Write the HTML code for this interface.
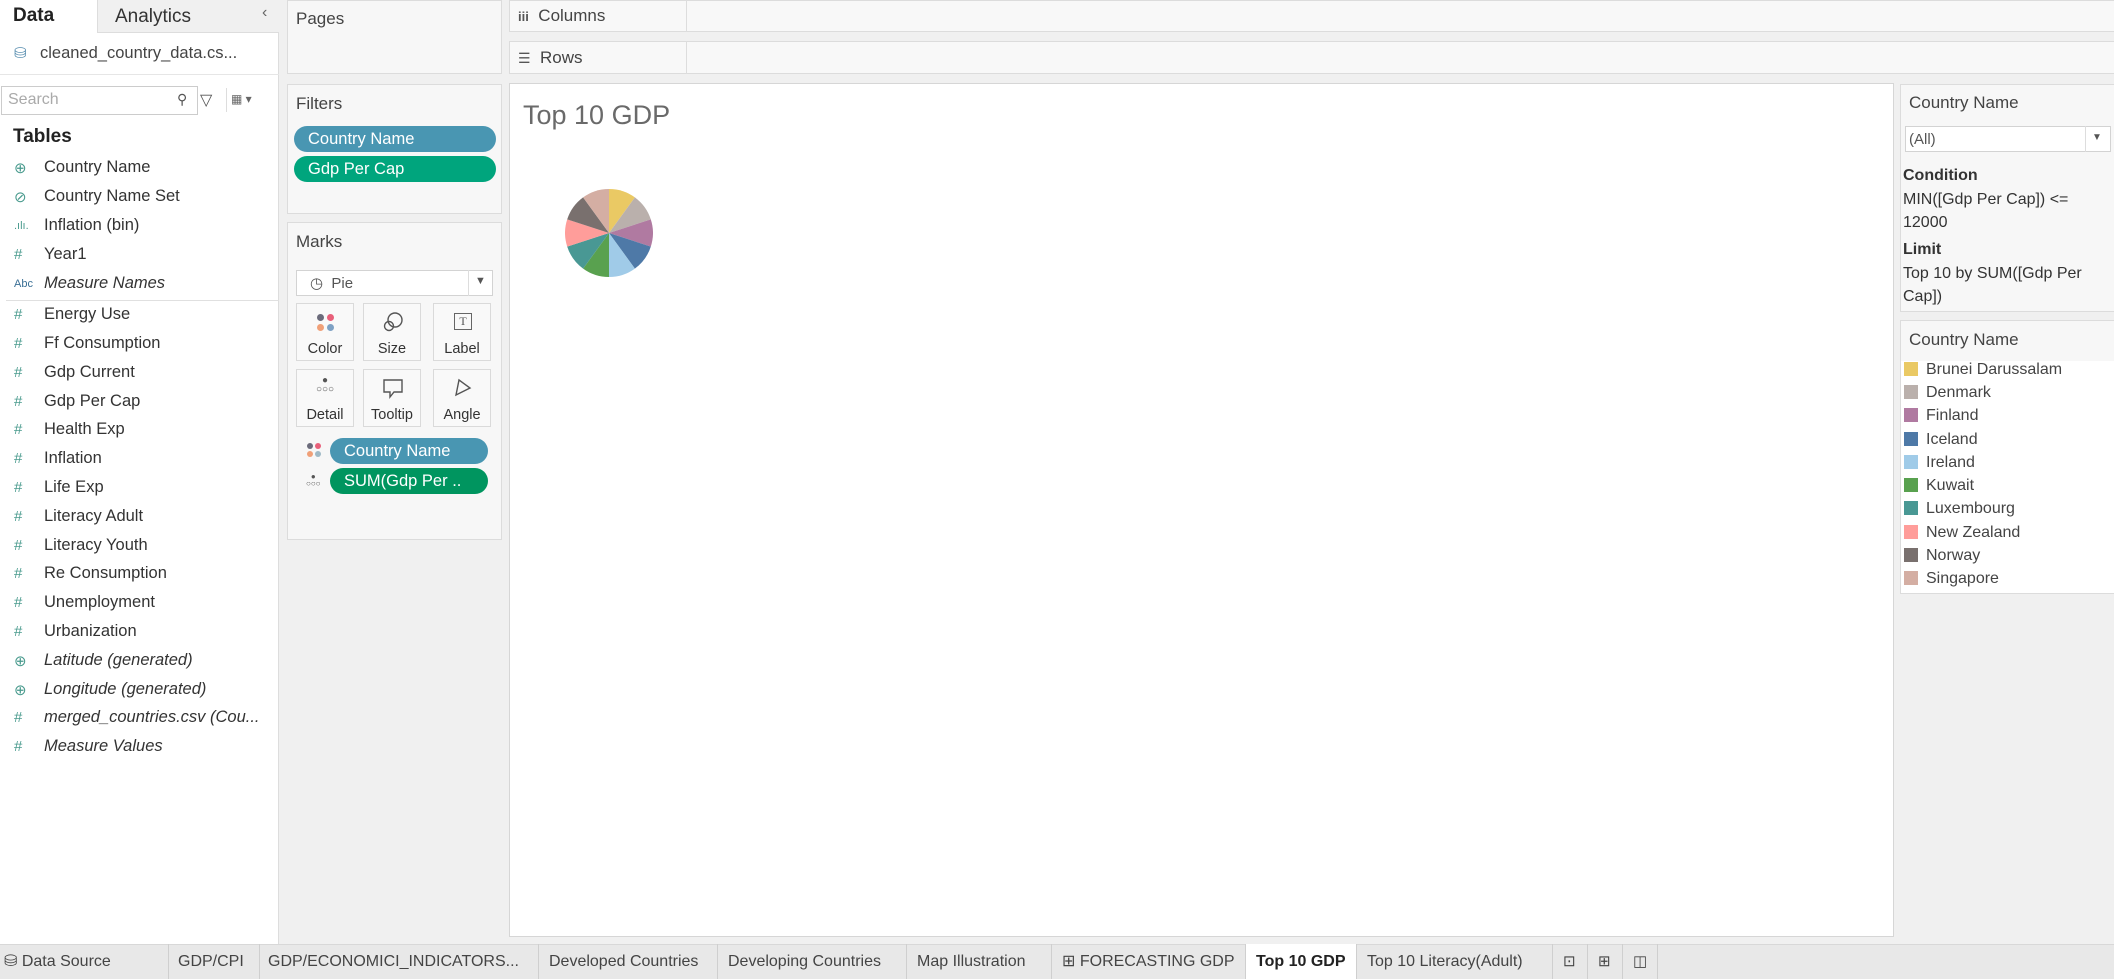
<!DOCTYPE html>
<html><head><meta charset="utf-8"><style>
*{box-sizing:border-box;margin:0;padding:0}
body{width:2114px;height:979px;overflow:hidden;background:#f0f0f0;font-family:"Liberation Sans",sans-serif;color:#333;position:relative}
.a{position:absolute}
.panel{position:absolute;background:#f7f7f7;border:1px solid #dcdcdc}
.t{font-size:17px;color:#444;white-space:nowrap}
.row{position:absolute;left:0;height:28px;font-size:16.5px;color:#333;white-space:nowrap}
.row .ic{position:absolute;left:14px;top:3px;color:#4a9b8e;font-size:15px}
.row .tx{position:absolute;left:44px;top:2px}
.pill{position:absolute;border-radius:14px;color:#fff;font-size:16.5px;padding-left:14px;line-height:26px;height:26px}
.mk{position:absolute;width:58px;height:58px;background:#f9f9f9;border:1px solid #dadada;text-align:center;font-size:14.5px;color:#333}
.mk .l{position:absolute;bottom:3px;left:0;right:0}
.tab{position:absolute;top:944px;height:35px;border-right:1px solid #cfcfcf;font-size:16px;color:#444;line-height:35px;padding-left:10px;white-space:nowrap}
.lg{position:absolute;left:1904px;font-size:16px;color:#444;white-space:nowrap}
.lg i{display:inline-block;width:14px;height:14px;margin-right:8px;vertical-align:-2px}
</style></head><body>
<!-- left panel -->
<div class="a" style="left:0;top:0;width:279px;height:944px;background:#fff;border-right:1px solid #ddd"></div>
<div class="a" style="left:97px;top:0;width:182px;height:33px;background:#f0f0f0;border-left:1px solid #ddd;border-bottom:1px solid #ddd"></div>
<div class="a" style="left:13px;top:5px;font-size:19px;font-weight:bold;color:#222">Data</div>
<div class="a" style="left:115px;top:6px;font-size:19px;color:#333">Analytics</div>
<div class="a" style="left:262px;top:4px;font-size:16px;color:#666">‹</div>
<div class="a" style="left:14px;top:44px;font-size:15px;color:#5a8fb0">⛁</div>
<div class="a t" style="left:40px;top:44px;font-size:16.5px">cleaned_country_data.cs...</div>
<div class="a" style="left:0;top:74px;width:279px;height:1px;background:#e6e6e6"></div>
<div class="a" style="left:1px;top:86px;width:197px;height:29px;border:1px solid #ccc;background:#fff"></div>
<div class="a" style="left:8px;top:91px;font-size:16px;color:#aaa">Search</div>
<div class="a" style="left:177px;top:91px;font-size:14px;color:#555">⚲</div>
<div class="a" style="left:200px;top:90px;font-size:16px;color:#555">▽</div>
<div class="a" style="left:226px;top:88px;width:1px;height:24px;background:#ddd"></div>
<div class="a" style="left:231px;top:92px;font-size:12px;color:#666">▦ ▾</div>
<div class="a" style="left:13px;top:126px;font-size:19px;font-weight:bold;color:#222">Tables</div>
<div class="row" style="top:156px"><span class="ic">⊕</span><span class="tx">Country Name</span></div>
<div class="row" style="top:185px"><span class="ic">⊘</span><span class="tx">Country Name Set</span></div>
<div class="row" style="top:214px"><span class="ic" style="font-size:11px;top:6px">.ılı.</span><span class="tx">Inflation (bin)</span></div>
<div class="row" style="top:243px"><span class="ic">#</span><span class="tx">Year1</span></div>
<div class="row" style="top:272px"><span class="ic" style="font-size:11px;top:6px;color:#3a6f95">Abc</span><span class="tx" style="font-style:italic">Measure Names</span></div>
<div class="a" style="left:6px;top:300px;width:273px;height:1px;background:#e0e0e0"></div>
<div class="row" style="top:303px"><span class="ic">#</span><span class="tx">Energy Use</span></div>
<div class="row" style="top:332px"><span class="ic">#</span><span class="tx">Ff Consumption</span></div>
<div class="row" style="top:361px"><span class="ic">#</span><span class="tx">Gdp Current</span></div>
<div class="row" style="top:390px"><span class="ic">#</span><span class="tx">Gdp Per Cap</span></div>
<div class="row" style="top:418px"><span class="ic">#</span><span class="tx">Health Exp</span></div>
<div class="row" style="top:447px"><span class="ic">#</span><span class="tx">Inflation</span></div>
<div class="row" style="top:476px"><span class="ic">#</span><span class="tx">Life Exp</span></div>
<div class="row" style="top:505px"><span class="ic">#</span><span class="tx">Literacy Adult</span></div>
<div class="row" style="top:534px"><span class="ic">#</span><span class="tx">Literacy Youth</span></div>
<div class="row" style="top:562px"><span class="ic">#</span><span class="tx">Re Consumption</span></div>
<div class="row" style="top:591px"><span class="ic">#</span><span class="tx">Unemployment</span></div>
<div class="row" style="top:620px"><span class="ic">#</span><span class="tx">Urbanization</span></div>
<div class="row" style="top:649px"><span class="ic">⊕</span><span class="tx" style="font-style:italic">Latitude (generated)</span></div>
<div class="row" style="top:678px"><span class="ic">⊕</span><span class="tx" style="font-style:italic">Longitude (generated)</span></div>
<div class="row" style="top:706px"><span class="ic">#</span><span class="tx" style="font-style:italic">merged_countries.csv (Cou...</span></div>
<div class="row" style="top:735px"><span class="ic">#</span><span class="tx" style="font-style:italic">Measure Values</span></div>

<!-- middle cards -->
<div class="panel" style="left:287px;top:0;width:215px;height:74px"></div>
<div class="a t" style="left:296px;top:9px">Pages</div>
<div class="panel" style="left:287px;top:84px;width:215px;height:130px"></div>
<div class="a t" style="left:296px;top:94px">Filters</div>
<div class="pill" style="left:294px;top:126px;width:202px;background:#4996b2">Country Name</div>
<div class="pill" style="left:294px;top:156px;width:202px;background:#00a57d">Gdp Per Cap</div>
<div class="panel" style="left:287px;top:222px;width:215px;height:318px"></div>
<div class="a t" style="left:296px;top:232px">Marks</div>
<div class="a" style="left:296px;top:270px;width:197px;height:26px;background:#fff;border:1px solid #d3d3d3"></div>
<div class="a" style="left:310px;top:274px;font-size:15px;color:#555">◷ &nbsp;Pie</div>
<div class="a" style="left:468px;top:270px;width:1px;height:26px;background:#ddd"></div>
<div class="a" style="left:475px;top:275px;font-size:11px;color:#555">▼</div>
<div class="mk" style="left:296px;top:303px"><div style="position:absolute;left:20px;top:10px;width:18px;height:18px"><i style="position:absolute;left:0;top:0;width:7px;height:7px;border-radius:50%;background:#6b6b7b"></i><i style="position:absolute;left:10px;top:0;width:7px;height:7px;border-radius:50%;background:#e8607a"></i><i style="position:absolute;left:0;top:10px;width:7px;height:7px;border-radius:50%;background:#f0a078"></i><i style="position:absolute;left:10px;top:10px;width:7px;height:7px;border-radius:50%;background:#7ea1c4"></i></div><div class="l">Color</div></div>
<div class="mk" style="left:363px;top:303px"><svg style="position:absolute;left:18px;top:7px" width="22" height="22" viewBox="0 0 22 22" fill="none" stroke="#555" stroke-width="1.4"><circle cx="13" cy="9" r="7"/><circle cx="7" cy="15" r="4.5"/></svg><div class="l">Size</div></div>
<div class="mk" style="left:433px;top:303px"><div style="position:absolute;left:20px;top:9px;width:18px;height:17px;border:1.5px solid #666;font-size:12px;line-height:14px;color:#555;font-family:'Liberation Serif',serif">T</div><div class="l">Label</div></div>
<div class="mk" style="left:296px;top:369px"><div style="position:absolute;left:0;right:0;top:6px;font-size:10px;color:#555;line-height:9px">●<br>○○○</div><div class="l">Detail</div></div>
<div class="mk" style="left:363px;top:369px"><svg style="position:absolute;left:18px;top:7px" width="22" height="22" viewBox="0 0 22 22" fill="none" stroke="#555" stroke-width="1.4"><path d="M2 3H20V15H12L8 20V15H2Z"/></svg><div class="l">Tooltip</div></div>
<div class="mk" style="left:433px;top:369px"><svg style="position:absolute;left:19px;top:7px" width="22" height="22" viewBox="0 0 22 22" fill="none" stroke="#555" stroke-width="1.4"><path d="M6 3L17 11L3 18Z"/></svg><div class="l">Angle</div></div>
<div class="a" style="left:307px;top:443px;width:14px;height:14px"><i style="position:absolute;left:0;top:0;width:6px;height:6px;border-radius:50%;background:#6b6b7b"></i><i style="position:absolute;left:8px;top:0;width:6px;height:6px;border-radius:50%;background:#e8607a"></i><i style="position:absolute;left:0;top:8px;width:6px;height:6px;border-radius:50%;background:#f0a078"></i><i style="position:absolute;left:8px;top:8px;width:6px;height:6px;border-radius:50%;background:#9fb9c6"></i></div>
<div class="pill" style="left:330px;top:438px;width:158px;background:#4996b2">Country Name</div>
<div class="a" style="left:306px;top:473px;font-size:8px;color:#555;line-height:7px;text-align:center">●<br>○○○</div>
<div class="pill" style="left:330px;top:468px;width:158px;background:#00955f">SUM(Gdp Per ..</div>

<!-- shelves -->
<div class="panel" style="left:509px;top:0;width:1610px;height:32px;background:#f8f8f8"></div>
<div class="a" style="left:686px;top:0;width:1px;height:32px;background:#ddd"></div>
<div class="a t" style="left:518px;top:6px"><b style="font-size:13px;color:#555">iii</b> &nbsp;Columns</div>
<div class="panel" style="left:509px;top:41px;width:1610px;height:33px;background:#f8f8f8"></div>
<div class="a" style="left:686px;top:41px;width:1px;height:33px;background:#ddd"></div>
<div class="a t" style="left:518px;top:48px"><span style="font-size:14px;color:#555">☰</span> &nbsp;Rows</div>

<!-- canvas -->
<div class="a" style="left:509px;top:83px;width:1385px;height:854px;background:#fff;border:1px solid #d6d6d6"></div>
<div class="a" style="left:523px;top:100px;font-size:27px;color:#6a6a6a;font-weight:normal">Top 10 GDP</div>
<svg class="a" style="left:565px;top:189px" width="88" height="88" viewBox="-44 -44 88 88">
<path d="M0 0L0 -44A44 44 0 0 1 25.9 -35.6Z" fill="#eac964"/>
<path d="M0 0L25.9 -35.6A44 44 0 0 1 41.8 -13.6Z" fill="#bab0ac"/>
<path d="M0 0L41.8 -13.6A44 44 0 0 1 41.8 13.6Z" fill="#b07aa1"/>
<path d="M0 0L41.8 13.6A44 44 0 0 1 25.9 35.6Z" fill="#4e79a7"/>
<path d="M0 0L25.9 35.6A44 44 0 0 1 0 44Z" fill="#a0cbe8"/>
<path d="M0 0L0 44A44 44 0 0 1 -25.9 35.6Z" fill="#59a14f"/>
<path d="M0 0L-25.9 35.6A44 44 0 0 1 -41.8 13.6Z" fill="#499894"/>
<path d="M0 0L-41.8 13.6A44 44 0 0 1 -41.8 -13.6Z" fill="#ff9d9a"/>
<path d="M0 0L-41.8 -13.6A44 44 0 0 1 -25.9 -35.6Z" fill="#79706e"/>
<path d="M0 0L-25.9 -35.6A44 44 0 0 1 0 -44Z" fill="#d4aea3"/>
</svg>

<!-- right panel -->
<div class="panel" style="left:1900px;top:84px;width:220px;height:228px"></div>
<div class="a t" style="left:1909px;top:93px">Country Name</div>
<div class="a" style="left:1905px;top:126px;width:206px;height:26px;background:#fff;border:1px solid #d3d3d3"></div>
<div class="a" style="left:1909px;top:131px;font-size:15px;color:#555">(All)</div>
<div class="a" style="left:2085px;top:126px;width:1px;height:26px;background:#ddd"></div>
<div class="a" style="left:2092px;top:132px;font-size:10px;color:#555">▼</div>
<div class="a" style="left:1903px;top:164px;font-size:16px;color:#333;line-height:23.5px"><b>Condition</b><br>MIN([Gdp Per Cap]) &lt;=<br>12000</div>
<div class="a" style="left:1903px;top:238px;font-size:16px;color:#333;line-height:23.5px"><b>Limit</b><br>Top 10 by SUM([Gdp Per<br>Cap])</div>
<div class="panel" style="left:1900px;top:320px;width:220px;height:274px;background:#fff"></div>
<div class="a" style="left:1901px;top:321px;width:219px;height:40px;background:#f7f7f7"></div>
<div class="a t" style="left:1909px;top:330px">Country Name</div>
<div class="lg" style="top:361px"><i style="background:#eac964"></i>Brunei Darussalam</div>
<div class="lg" style="top:384px"><i style="background:#bab0ac"></i>Denmark</div>
<div class="lg" style="top:407px"><i style="background:#b07aa1"></i>Finland</div>
<div class="lg" style="top:431px"><i style="background:#4e79a7"></i>Iceland</div>
<div class="lg" style="top:454px"><i style="background:#a0cbe8"></i>Ireland</div>
<div class="lg" style="top:477px"><i style="background:#59a14f"></i>Kuwait</div>
<div class="lg" style="top:500px"><i style="background:#499894"></i>Luxembourg</div>
<div class="lg" style="top:524px"><i style="background:#ff9d9a"></i>New Zealand</div>
<div class="lg" style="top:547px"><i style="background:#79706e"></i>Norway</div>
<div class="lg" style="top:570px"><i style="background:#d4aea3"></i>Singapore</div>

<!-- bottom tabs -->
<div class="a" style="left:0;top:944px;width:2114px;height:35px;background:#e8e8e8;border-top:1px solid #d8d8d8"></div>
<div class="tab" style="left:0;width:169px;padding-left:4px">⛁ Data Source</div>
<div class="tab" style="left:169px;width:91px;padding-left:9px">GDP/CPI</div>
<div class="tab" style="left:260px;width:279px;padding-left:8px">GDP/ECONOMICI_INDICATORS...</div>
<div class="tab" style="left:539px;width:179px">Developed Countries</div>
<div class="tab" style="left:718px;width:189px">Developing Countries</div>
<div class="tab" style="left:907px;width:145px">Map Illustration</div>
<div class="tab" style="left:1052px;width:194px">⊞ FORECASTING GDP</div>
<div class="tab" style="left:1246px;width:111px;background:#fff;font-weight:bold;color:#222">Top 10 GDP</div>
<div class="tab" style="left:1357px;width:196px">Top 10 Literacy(Adult)</div>
<div class="tab" style="left:1553px;width:35px;font-size:15px">⊡</div>
<div class="tab" style="left:1588px;width:35px;font-size:15px">⊞</div>
<div class="tab" style="left:1623px;width:35px;font-size:15px">◫</div>
</body></html>
